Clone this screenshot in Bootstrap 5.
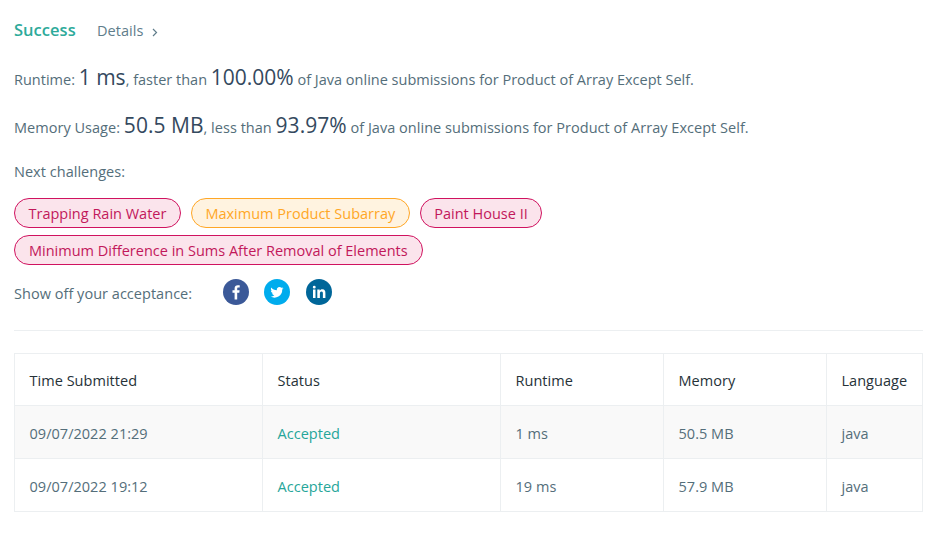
<!DOCTYPE html>
<html lang="en">
<head>
<meta charset="utf-8">
<title>Submission result</title>
<link rel="stylesheet" href="https://cdn.jsdelivr.net/npm/bootstrap@5.3.0/dist/css/bootstrap.min.css">
<style>
body{font-family:"Open Sans","Noto Sans","Liberation Sans",sans-serif;font-size:14.5px;letter-spacing:.03px;color:#546e7a;background:#fff}
.sheet{padding:16px 13px 0 14px}
.head-row{height:28px;margin-bottom:22px}
.ok-title{font-size:16.5px;font-weight:600;color:#2daa9a;width:83px}
.more-link{color:#607d8b;text-decoration:none;margin-top:2px}
.more-link svg{margin-left:9px;margin-top:2px}
.stat-line{height:22px;margin-bottom:26px;line-height:22px;white-space:nowrap}
.stat-line.tight{letter-spacing:0}
.big-num{font-size:21px;color:#34495e}
.next-label{height:20px;line-height:20px;margin-bottom:16px}
.tag-wrap{gap:7px 10px;margin-bottom:14px}
.tag-pill{height:30px;line-height:30px;padding:0 13.5px;border-radius:15px;border:1px solid #d0125f;background:#fbe4ec;color:#c2185b;white-space:nowrap;letter-spacing:0}
.tag-pill.warn{border-color:#ffa726;background:#fff3e0;color:#ffa726}
.tag-pill.long-tag{padding:0 14px}
.share-row{height:26px;margin-bottom:25px}
.share-label{width:208.5px;padding-top:4px}
.share-ico{width:26px;height:26px;display:block}
.share-set{gap:15.5px}
.thin-rule{border-top:1px solid #eceff1;margin:0 0 22px;opacity:1}
.result-grid{table-layout:fixed;width:908px;margin:0;border-color:#eceff1;--bs-table-border-color:#eceff1;--bs-table-striped-bg:#f9f9f9;--bs-table-color:#546e7a;--bs-table-striped-color:#546e7a}
.result-grid th,.result-grid td{height:53px;padding:4px 14.5px 0;vertical-align:middle;font-weight:400;color:#546e7a}
.result-grid th{height:52px;padding-top:2px;color:#263238}
.result-grid td.done-text{--bs-table-striped-color:#26a69a;color:#26a69a}
</style>
</head>
<body>
<div class="sheet">
  <div class="head-row d-flex align-items-center">
    <span class="ok-title">Success</span>
    <a class="more-link d-flex align-items-center" href="#">Details<svg width="6" height="9" viewBox="0 0 6 9"><path d="M1 1l3.500 3.500L1 8" fill="none" stroke="#607d8b" stroke-width="1.200"/></svg></a>
  </div>
  <div class="stat-line tight">Runtime: <span class="big-num">1 ms</span>, faster than <span class="big-num">100.00%</span> of Java online submissions for Product of Array Except Self.</div>
  <div class="stat-line">Memory Usage: <span class="big-num">50.5 MB</span>, less than <span class="big-num">93.97%</span> of Java online submissions for Product of Array Except Self.</div>
  <div class="next-label">Next challenges:</div>
  <div class="tag-wrap d-flex flex-wrap">
    <span class="tag-pill">Trapping Rain Water</span>
    <span class="tag-pill warn">Maximum Product Subarray</span>
    <span class="tag-pill">Paint House II</span>
    <span class="tag-pill long-tag">Minimum Difference in Sums After Removal of Elements</span>
  </div>
  <div class="share-row d-flex align-items-center">
    <span class="share-label">Show off your acceptance:</span>
    <div class="share-set d-flex">
      <svg class="share-ico" viewBox="0 0 26 26" aria-label="Facebook"><circle cx="13" cy="13" r="13" fill="#3b5998"/><path d="M14.200 20.500v-6.800h2.100l.3-2.500h-2.400V9.700c0-.7.2-1.200 1.200-1.200h1.300V6.300c-.2 0-1-.1-1.900-.1-1.900 0-3.200 1.100-3.200 3.300v1.700H9.500v2.500h2.100v6.800z" fill="#fff"/></svg>
      <svg class="share-ico" viewBox="0 0 26 26" aria-label="Twitter"><circle cx="13" cy="13" r="13" fill="#00aced"/><path transform="translate(1.700 1.700) scale(.87)" d="M20.500 8.600c-.6.3-1.200.4-1.800.5.600-.4 1.100-1 1.400-1.700-.6.4-1.300.6-2 .8a3.100 3.100 0 0 0-5.300 2.800c-2.600-.1-4.900-1.400-6.400-3.300-.8 1.400-.4 3.200 1 4.100-.5 0-1-.1-1.400-.4 0 1.500 1.100 2.800 2.500 3.100-.5.100-.9.100-1.400 0 .4 1.200 1.500 2.100 2.900 2.100A6.200 6.200 0 0 1 5.500 18a8.800 8.800 0 0 0 13.500-7.800c.6-.4 1.100-1 1.500-1.600z" fill="#fff"/></svg>
      <svg class="share-ico" viewBox="0 0 26 26" aria-label="LinkedIn"><circle cx="13" cy="13" r="13" fill="#006699"/><path d="M7 10.500h2.500V19H7zM8.250 6.700a1.450 1.450 0 1 1 0 2.900 1.450 1.450 0 0 1 0-2.900zM11.300 10.500h2.400v1.200c.4-.7 1.300-1.400 2.600-1.400 2.600 0 3.100 1.700 3.100 3.900V19h-2.500v-4.200c0-1 0-2.300-1.400-2.300s-1.600 1.100-1.600 2.200V19h-2.600z" fill="#fff"/></svg>
    </div>
  </div>
  <hr class="thin-rule">
  <table class="table table-bordered table-striped result-grid">
    <colgroup><col style="width:248px"><col style="width:238px"><col style="width:163px"><col style="width:163px"><col style="width:96px"></colgroup>
    <thead><tr><th>Time Submitted</th><th>Status</th><th>Runtime</th><th>Memory</th><th>Language</th></tr></thead>
    <tbody>
      <tr><td>09/07/2022 21:29</td><td class="done-text">Accepted</td><td>1 ms</td><td>50.5 MB</td><td>java</td></tr>
      <tr><td>09/07/2022 19:12</td><td class="done-text">Accepted</td><td>19 ms</td><td>57.9 MB</td><td>java</td></tr>
    </tbody>
  </table>
</div>
<script src="https://cdn.jsdelivr.net/npm/bootstrap@5.3.0/dist/js/bootstrap.bundle.min.js"></script>
</body>
</html>
